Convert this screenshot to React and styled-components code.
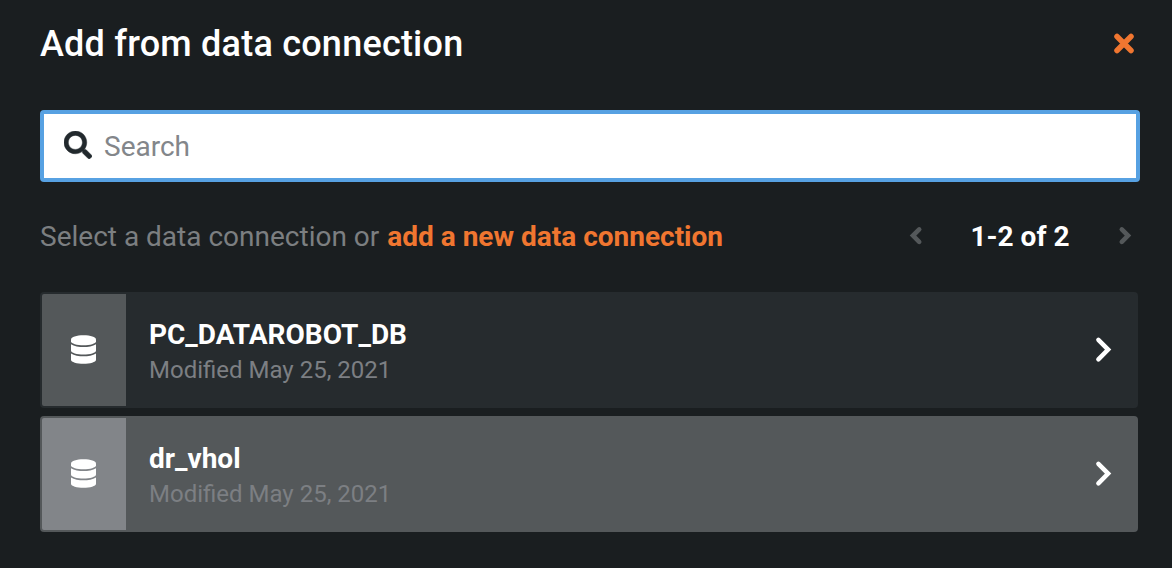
import React from 'react';
import styled, { createGlobalStyle } from 'styled-components';
import { FaSearch } from 'react-icons/fa';

const GlobalStyle = createGlobalStyle`
  *, *::before, *::after { box-sizing: border-box; }
  body { margin: 0; background: #1a1e20; font-family: Roboto, sans-serif; }
`;

const Panel = styled.main`
  display: flex;
  flex-direction: column;
  height: 568px;
  padding: 20px 32px 0 40px;
  background: #1a1e20;
`;

const Header = styled.header`
  display: flex;
  align-items: center;
  justify-content: space-between;
  height: 48px;
  padding-right: 6px;
`;

const Title = styled.h1`
  margin: 0;
  font-size: 36px;
  font-weight: 500;
  line-height: 48px;
  letter-spacing: 0.22px;
  color: #fff;
  white-space: nowrap;
`;

const IconButton = styled.button`
  display: flex;
  margin: 0 0 2px;
  padding: 0;
  border: 0;
  background: none;
  color: ${(p) => p.$color};
`;

const SearchBox = styled.label`
  display: flex;
  align-items: center;
  gap: 12px;
  flex: none;
  height: 72px;
  margin-top: 42px;
  padding: 0 20px;
  border: 4px solid #57a1e2;
  border-radius: 4px;
  background: #fff;
  color: #22292d;
`;

const SearchIcon = styled(FaSearch)`
  margin-bottom: 2px;
  stroke: currentColor;
  stroke-width: 8px;
`;

const SearchInput = styled.input`
  flex: 1;
  padding: 2px 0 0;
  border: 0;
  outline: 0;
  background: none;
  font: 400 28px/36px Roboto, sans-serif;
  &::placeholder { color: #83868a; opacity: 1; }
`;

const Toolbar = styled.div`
  display: flex;
  align-items: center;
  justify-content: space-between;
  height: 40px;
  margin-top: 35px;
  padding-right: 9px;
`;

const Hint = styled.p`
  margin: 0;
  font-size: 28px;
  line-height: 40px;
  color: #7c7f81;
  white-space: nowrap;
`;

const AddLink = styled.a`
  margin-left: 1px;
  font-weight: 700;
  color: #f07630;
`;

const Pager = styled.nav`
  display: flex;
  align-items: center;
  justify-content: space-between;
  width: 222px;
`;

const PageRange = styled.span`
  font-size: 28px;
  font-weight: 700;
  line-height: 40px;
  color: #fff;
`;

const List = styled.ul`
  display: flex;
  flex-direction: column;
  gap: 8px;
  margin: 35px 2px 0 0;
  padding: 0;
  list-style: none;
`;

const Row = styled.li`
  display: flex;
  align-items: center;
  height: 116px;
  padding: 2px 26px 2px 2px;
  border-radius: 4px;
  background: ${(p) => (p.$active ? '#54585a' : '#262b2e')};
  color: #fff;
`;

const Thumb = styled.span`
  display: flex;
  align-items: center;
  justify-content: center;
  width: 84px;
  height: 112px;
  padding: 0 1px 1px 0;
  border-radius: 2px 0 0 2px;
  background: ${(p) => (p.$active ? '#828589' : '#54585a')};
`;

const RowText = styled.div`
  flex: 1;
  margin-left: 23px;
  padding-top: 4px;
`;

const RowName = styled.div`
  font-size: 28px;
  font-weight: 700;
  line-height: 36px;
`;

const RowMeta = styled.div`
  font-size: 24px;
  line-height: 34px;
  color: #7c7f83;
`;

const StrokeIcon = styled.svg`
  display: block;
  overflow: visible;
  fill: none;
  stroke: currentColor;
  stroke-linecap: round;
`;

const Close = () => (
  <StrokeIcon width="20" height="20" viewBox="0 0 20 20" strokeWidth="5.5">
    <path d="M3 3.5l14 14M17 3.5l-14 14" />
  </StrokeIcon>
);

const SmallChevron = ({ left }) => (
  <StrokeIcon width="13" height="18" viewBox="0 0 13 18" strokeWidth="4.6">
    <path d={left ? 'M10.2 2.4L4 8.6L10.2 14.8' : 'M3.8 2.4L10 8.6L3.8 14.8'} />
  </StrokeIcon>
);

const LargeChevron = () => (
  <StrokeIcon width="16" height="26" viewBox="0 0 16 26" strokeWidth="4.5">
    <path d="M2.4 2.9L12.1 12.6L2.4 22.3" />
  </StrokeIcon>
);

const Database = () => (
  <svg width="25" height="29" viewBox="0 0 25 29" fill="currentColor">
    <path d="M0 4.5C0 1.9 5.5 0.3 12.5 0.3S25 1.9 25 4.5V6.2C25 8.7 19 10.2 12.5 10.2S0 8.7 0 6.2Z" />
    <path d="M0 9.2C3 11.2 8 12.1 12.5 12.1S22 11.2 25 9.2V15.4C25 17.9 19 19.4 12.5 19.4S0 17.9 0 15.4Z" />
    <path d="M0 18.4C3 20.4 8 21.3 12.5 21.3S22 20.4 25 18.4V24.7C25 27.2 19 28.7 12.5 28.7S0 27.2 0 24.7Z" />
  </svg>
);

const connections = [
  { name: 'PC_DATAROBOT_DB', modified: 'Modified May 25, 2021' },
  { name: 'dr_vhol', modified: 'Modified May 25, 2021', active: true },
];

export default function App() {
  return (
    <>
      <GlobalStyle />
      <Panel>
        <Header>
          <Title>Add from data connection</Title>
          <IconButton $color="#f07630" aria-label="Close"><Close /></IconButton>
        </Header>
        <SearchBox>
          <SearchIcon size={28} />
          <SearchInput placeholder="Search" />
        </SearchBox>
        <Toolbar>
          <Hint>Select a data connection or <AddLink>add a new data connection</AddLink></Hint>
          <Pager>
            <IconButton $color="#54585a" aria-label="Previous"><SmallChevron left /></IconButton>
            <PageRange>1-2 of 2</PageRange>
            <IconButton $color="#54585a" aria-label="Next"><SmallChevron /></IconButton>
          </Pager>
        </Toolbar>
        <List>
          {connections.map((c) => (
            <Row key={c.name} $active={c.active}>
              <Thumb $active={c.active}><Database /></Thumb>
              <RowText>
                <RowName>{c.name}</RowName>
                <RowMeta>{c.modified}</RowMeta>
              </RowText>
              <LargeChevron />
            </Row>
          ))}
        </List>
      </Panel>
    </>
  );
}
